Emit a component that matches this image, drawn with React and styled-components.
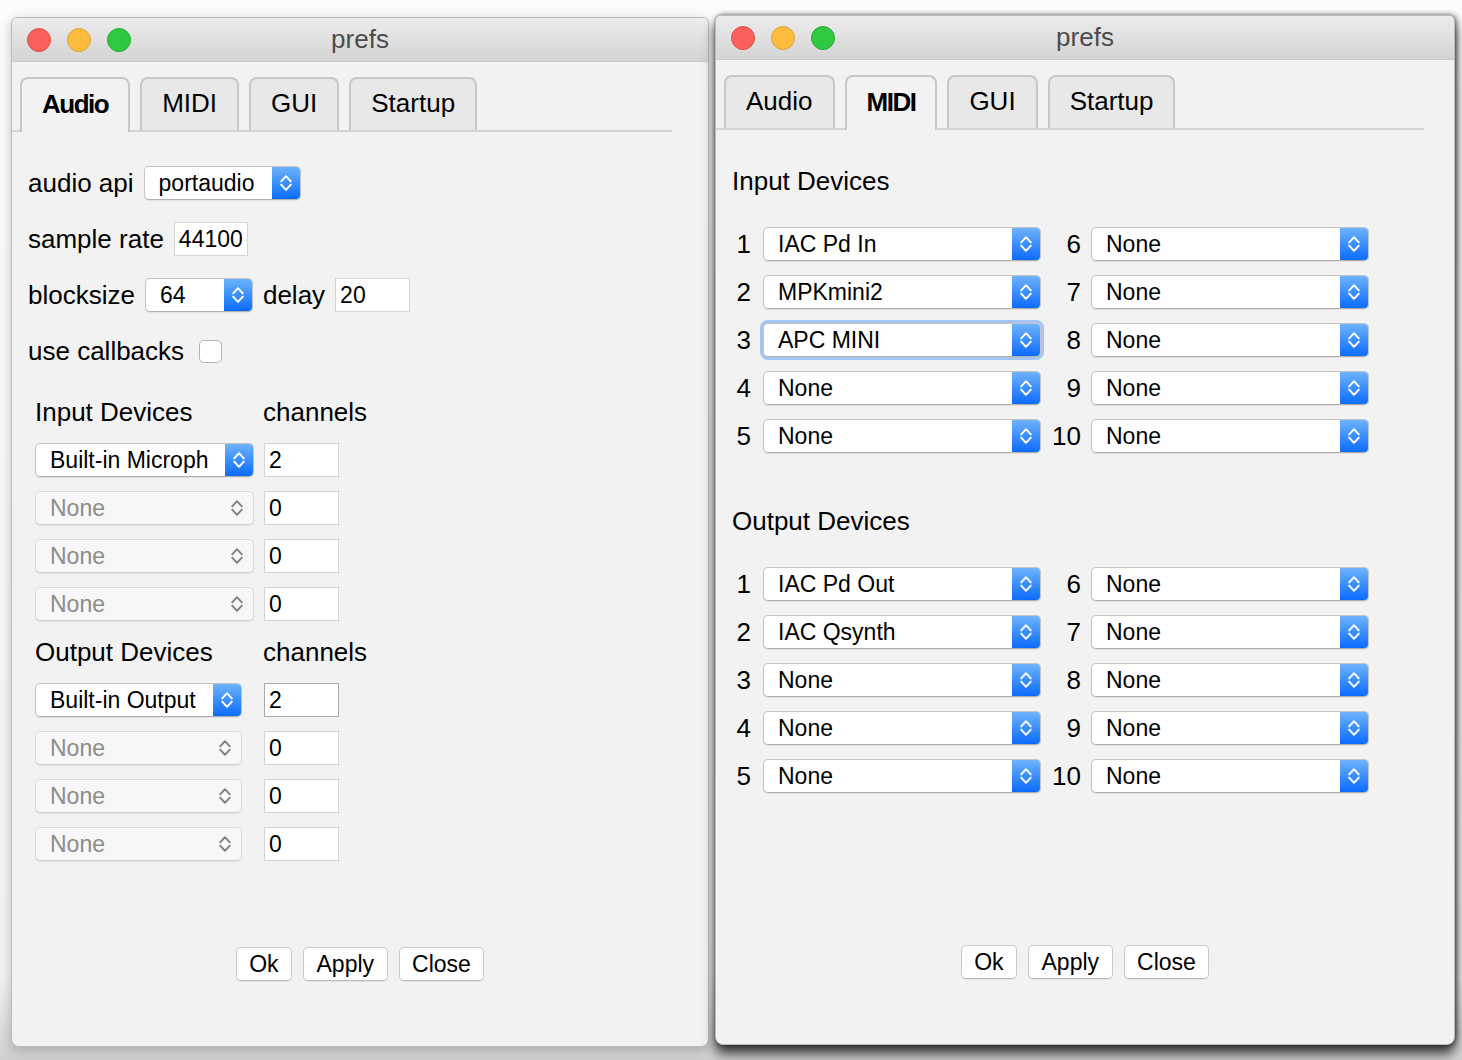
import React from 'react';
import styled, { createGlobalStyle } from 'styled-components';

const GlobalStyle = createGlobalStyle`
  html, body {
    margin: 0;
    padding: 0;
  }
  body {
    width: 1462px;
    height: 1060px;
    overflow: hidden;
    background: #f6f6f6;
    font-family: "Liberation Sans", Arial, Helvetica, sans-serif;
    color: #000;
  }
`;

const Page = styled.div`
  display: flex;
  align-items: flex-start;
  gap: 6px;
  height: 1060px;
  box-sizing: border-box;
  padding: 15px 0 0 11px;
  background: linear-gradient(#fcfcfc, #f3f3f3 92%, #cfcfcf);
`;

const Window = styled.div`
  width: ${p => p.$w}px;
  height: 1030px;
  margin-top: ${p => p.$top || 0}px;
  box-sizing: border-box;
  display: flex;
  flex-direction: column;
  background: #f2f2f2;
  border: 1px solid #bcbcbc;
  border-radius: 6px 6px 8px 8px;
  overflow: hidden;
  box-shadow: ${p => (p.$active
    ? '0 9px 12px rgba(0,0,0,0.7), 2px 0 6px rgba(0,0,0,0.45), 0 0 3px rgba(0,0,0,0.35)'
    : '0 3px 12px rgba(0,0,0,0.22)')};
`;

const TitleBar = styled.div`
  height: 43px;
  flex: none;
  display: grid;
  grid-template-columns: 1fr auto 1fr;
  align-items: center;
  padding: 0 15px;
  background: linear-gradient(#ececec, #d4d4d4);
  border-bottom: 1px solid #c9c9c9;
`;

const Lights = styled.div`
  display: flex;
  gap: 16px;
`;

const Light = styled.span`
  width: 24px;
  height: 24px;
  border-radius: 50%;
  box-sizing: border-box;
  background: ${p => p.$c};
  border: 1px solid ${p => p.$b};
`;

const Title = styled.div`
  font-size: 26px;
  color: #4b4b4b;
`;

const TabBar = styled.div`
  display: flex;
  align-items: flex-start;
  gap: 10px;
  height: 53px;
  margin: 15px ${p => p.$right}px 0 0;
  padding-left: 8px;
  border-bottom: 2px solid #d3d3d3;
`;

const Tab = styled.div`
  height: ${p => (p.$on ? 55 : 53)}px;
  flex: none;
  box-sizing: border-box;
  display: flex;
  align-items: center;
  padding: 0 20px 2px;
  border: 2px solid #c7c7c7;
  border-bottom: none;
  border-radius: 8px 8px 0 0;
  background: ${p => (p.$on ? '#f2f2f2' : '#e8e8e8')};
  font-size: 26px;
  font-weight: ${p => (p.$on ? 'bold' : 'normal')};
  letter-spacing: ${p => (p.$on ? '-1.5px' : '0')};
  position: relative;
  z-index: ${p => (p.$on ? 1 : 0)};
`;

const Content = styled.div`
  flex: 1;
  display: flex;
  flex-direction: column;
`;

const Form = styled.div`
  display: flex;
  flex-direction: column;
  padding: ${p => p.$pad};
`;

const FormRow = styled.div`
  display: flex;
  align-items: center;
  gap: 10px;
  height: 56px;
  font-size: 26px;
`;

const SelectBox = styled.div`
  width: ${p => p.$w}px;
  height: 34px;
  flex: none;
  box-sizing: border-box;
  display: flex;
  border: 1px solid ${p => (p.$disabled ? '#dadada' : '#c4c4c4')};
  border-bottom-color: ${p => (p.$disabled ? '#d2d2d2' : '#b0b0b0')};
  border-radius: 5px;
  overflow: hidden;
  background: ${p => (p.$disabled ? '#f7f7f7' : '#fff')};
  box-shadow: ${p => (p.$focused
    ? '0 0 0 3px rgba(100, 160, 245, 0.55)'
    : '0 1px 1px rgba(0,0,0,0.08)')};
`;

const SelectText = styled.div`
  flex: 1;
  display: flex;
  align-items: center;
  padding-left: 14px;
  font-size: 23px;
  white-space: nowrap;
  overflow: hidden;
  color: ${p => (p.$disabled ? '#8b8b8b' : '#000')};
`;

const Stepper = styled.div`
  width: ${p => (p.$disabled ? 32 : 28)}px;
  flex: none;
  display: flex;
  align-items: center;
  justify-content: center;
  background: ${p => (p.$disabled ? 'transparent' : 'linear-gradient(#6db3fb, #0b6cfe)')};
`;

const TextField = styled.div`
  width: ${p => p.$w}px;
  height: 34px;
  flex: none;
  box-sizing: border-box;
  display: flex;
  align-items: center;
  padding-left: 4px;
  background: #fff;
  border: 1px solid ${p => (p.$focus ? '#a9a9a9' : '#d4d4d4')};
  font-size: 23px;
`;

const CheckBox = styled.span`
  width: 23px;
  height: 23px;
  margin-left: 5px;
  box-sizing: border-box;
  background: #fff;
  border: 1px solid #b4b4b4;
  border-radius: 5px;
`;

const DeviceGrid = styled.div`
  display: grid;
  grid-template-columns: 229px 76px;
  grid-auto-rows: 48px;
  align-items: center;
  margin: ${p => p.$mt || 0}px 0 0 7px;
  font-size: 26px;
`;

const HeadCell = styled.div`
  margin-left: ${p => p.$ml || 0}px;
`;

const SectionTitle = styled.div`
  height: 48px;
  display: flex;
  align-items: center;
  margin-top: ${p => p.$mt}px;
  margin-bottom: 15px;
  padding-left: 4px;
  font-size: 26px;
`;

const MidiGrid = styled.div`
  display: grid;
  grid-template-columns: 36px 278px 50px 278px;
  grid-auto-rows: 48px;
  align-items: center;
  margin-left: -1px;
`;

const Num = styled.div`
  text-align: right;
  padding-right: ${p => (p.$wide ? 10 : 12)}px;
  font-size: 26px;
`;

const ButtonBar = styled.div`
  margin-top: auto;
  display: flex;
  justify-content: center;
  gap: 11px;
  padding-bottom: 65px;
`;

const Button = styled.div`
  height: 34px;
  box-sizing: border-box;
  display: flex;
  align-items: center;
  padding: 0 ${p => p.$px || 13}px;
  background: #fff;
  border: 1px solid #cacaca;
  border-bottom-color: #b8b8b8;
  border-radius: 5px;
  box-shadow: 0 1px 1px rgba(0,0,0,0.06);
  font-size: 23px;
`;

const Chevrons = ({ color }) => (
  <svg width="12" height="20" viewBox="0 0 12 20" fill="none" stroke={color} strokeWidth="1.9" strokeLinecap="round" strokeLinejoin="round">
    <path d="M1.2 8.4L6 3.2l4.8 5.2" />
    <path d="M1.2 11.6L6 16.8l4.8-5.2" />
  </svg>
);

const Select = ({ value, width, disabled, focused }) => (
  <SelectBox $w={width} $disabled={disabled} $focused={focused}>
    <SelectText $disabled={disabled}>{value}</SelectText>
    <Stepper $disabled={disabled}>
      <Chevrons color={disabled ? '#808080' : '#fff'} />
    </Stepper>
  </SelectBox>
);

const TitleRow = ({ title }) => (
  <TitleBar>
    <Lights>
      <Light $c="#fd605c" $b="#df4b46" />
      <Light $c="#febc3f" $b="#dea238" />
      <Light $c="#2ec940" $b="#25aa33" />
    </Lights>
    <Title>{title}</Title>
    <span />
  </TitleBar>
);

const TABS = ['Audio', 'MIDI', 'GUI', 'Startup'];

const Tabs = ({ active, right }) => (
  <TabBar $right={right}>
    {TABS.map(t => (
      <Tab key={t} $on={t === active}>{t}</Tab>
    ))}
  </TabBar>
);

const Buttons = () => (
  <ButtonBar>
    <Button $px={12}>Ok</Button>
    <Button>Apply</Button>
    <Button $px={12}>Close</Button>
  </ButtonBar>
);

const audioInputs = [
  { name: 'Built-in Microph', ch: '2' },
  { name: 'None', ch: '0' },
  { name: 'None', ch: '0' },
  { name: 'None', ch: '0' },
];

const audioOutputs = [
  { name: 'Built-in Output', ch: '2', focus: true },
  { name: 'None', ch: '0' },
  { name: 'None', ch: '0' },
  { name: 'None', ch: '0' },
];

const DeviceRows = ({ rows, width }) =>
  rows.map((r, i) => (
    <React.Fragment key={i}>
      <Select value={r.name} width={width} disabled={r.name === 'None'} />
      <TextField $w={75} $focus={r.focus}>{r.ch}</TextField>
    </React.Fragment>
  ));

const AudioWindow = () => (
  <Window $w={698} $top={2}>
    <TitleRow title="prefs" />
    <Tabs active="Audio" right={36} />
    <Content>
      <Form $pad="23px 0 0 16px">
        <FormRow>
          audio api
          <Select value="portaudio" width={157} />
        </FormRow>
        <FormRow>
          sample rate
          <TextField $w={74}>44100</TextField>
        </FormRow>
        <FormRow>
          blocksize
          <Select value="64" width={108} />
          <span>delay</span>
          <TextField $w={75}>20</TextField>
        </FormRow>
        <FormRow>
          use callbacks
          <CheckBox />
        </FormRow>
        <DeviceGrid $mt={9}>
          <HeadCell>Input Devices</HeadCell>
          <HeadCell $ml={-1}>channels</HeadCell>
          <DeviceRows rows={audioInputs} width={219} />
          <HeadCell>Output Devices</HeadCell>
          <HeadCell $ml={-1}>channels</HeadCell>
          <DeviceRows rows={audioOutputs} width={207} />
        </DeviceGrid>
      </Form>
      <Buttons />
    </Content>
  </Window>
);

const midiIn = ['IAC Pd In', 'MPKmini2', 'APC MINI', 'None', 'None'];
const midiOut = ['IAC Pd Out', 'IAC Qsynth', 'None', 'None', 'None'];

const MidiRows = ({ names, focusIndex }) => (
  <MidiGrid>
    {names.map((n, i) => (
      <React.Fragment key={i}>
        <Num>{i + 1}</Num>
        <Select value={n} width={278} focused={i === focusIndex} />
        <Num $wide>{i + 6}</Num>
        <Select value="None" width={278} />
      </React.Fragment>
    ))}
  </MidiGrid>
);

const MidiWindow = () => (
  <Window $w={740} $active>
    <TitleRow title="prefs" />
    <Tabs active="MIDI" right={30} />
    <Content>
      <Form $pad="0 0 0 12px">
        <SectionTitle $mt={27}>Input Devices</SectionTitle>
        <MidiRows names={midiIn} focusIndex={2} />
        <SectionTitle $mt={37}>Output Devices</SectionTitle>
        <MidiRows names={midiOut} />
      </Form>
      <Buttons />
    </Content>
  </Window>
);

export default function App() {
  return (
    <>
      <GlobalStyle />
      <Page>
        <AudioWindow />
        <MidiWindow />
      </Page>
    </>
  );
}
